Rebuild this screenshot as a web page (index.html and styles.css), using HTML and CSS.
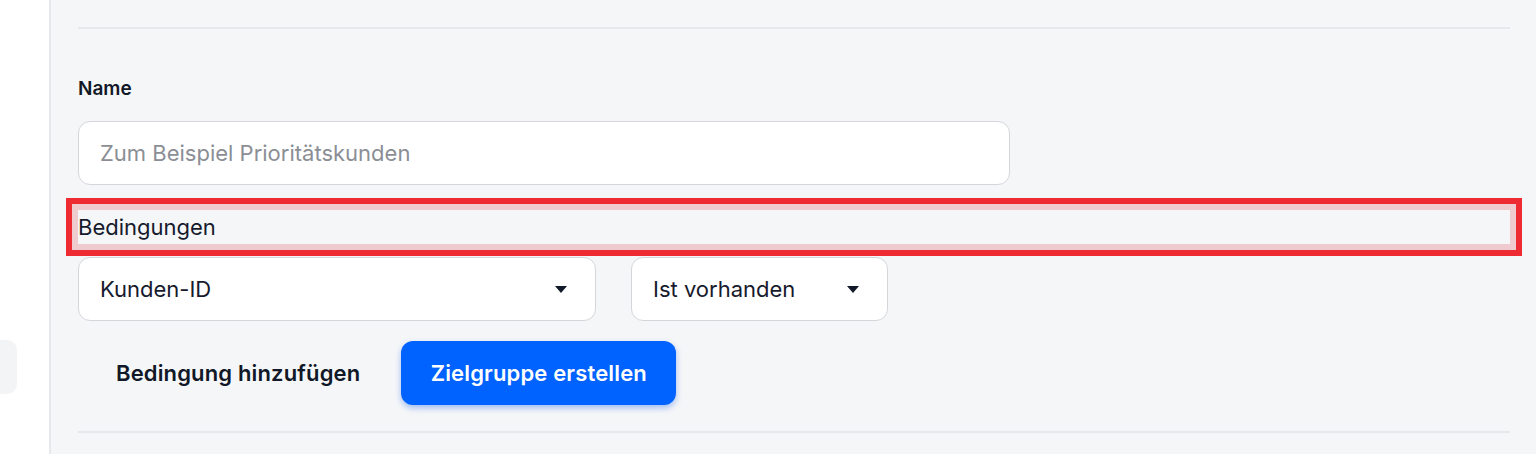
FILE: index.html
```html
<!DOCTYPE html>
<html lang="de">
<head>
<meta charset="utf-8">
<title>Zielgruppe erstellen</title>
<link rel="stylesheet" href="styles.css">
</head>
<body>
<div class="app">
  <aside class="sidebar">
    <div class="side-item"></div>
  </aside>
  <main class="main">
    <hr class="divider">
    <form class="form">
      <label class="field-label" for="name">Name</label>
      <input id="name" class="text-input" type="text" placeholder="Zum Beispiel Prioritätskunden">
      <div class="section-label">Bedingungen</div>
      <div class="conditions">
        <div class="select select-wide">
          <span>Kunden-ID</span>
          <svg class="caret" width="12" height="7" viewBox="0 0 12 7"><path d="M0 0h12L6 7z" fill="#111827"/></svg>
        </div>
        <div class="select select-narrow">
          <span>Ist vorhanden</span>
          <svg class="caret" width="12" height="7" viewBox="0 0 12 7"><path d="M0 0h12L6 7z" fill="#111827"/></svg>
        </div>
      </div>
      <div class="actions">
        <button type="button" class="btn-text">Bedingung hinzufügen</button>
        <button type="button" class="btn-primary">Zielgruppe erstellen</button>
      </div>
    </form>
    <hr class="divider divider-bottom">
  </main>
</div>
</body>
</html>
```

FILE: styles.css
```css
* { box-sizing: border-box; }

html, body {
  margin: 0;
  padding: 0;
  height: 100%;
}

body {
  font-family: Inter, "Noto Sans", sans-serif;
  color: #111827;
  background: #f5f6f8;
  overflow: hidden;
}

.app {
  display: flex;
  height: 454px;
}

.sidebar {
  width: 51px;
  flex: none;
  background: #ffffff;
  border-right: 2px solid #e7e8eb;
  padding-top: 340px;
}

.side-item {
  width: 17px;
  height: 54px;
  background: #f3f4f6;
  border-radius: 0 10px 10px 0;
}

.main {
  flex: 1;
  padding: 27px 26px 0 27px;
}

.divider {
  margin: 0;
  border: 0;
  height: 2px;
  background: #e6e8eb;
}

.divider-bottom {
  margin-top: 26px;
}

.form {
  display: flex;
  flex-direction: column;
  align-items: flex-start;
  padding-top: 48px;
}

.field-label {
  font-size: 19px;
  line-height: 24px;
  font-weight: 600;
  color: #111827;
}

.text-input {
  margin-top: 20px;
  width: 932px;
  height: 64px;
  border: 1.5px solid #d4d6da;
  border-radius: 12px;
  background: #ffffff;
  padding: 0 21px;
  font-family: inherit;
  font-size: 22px;
  color: #111827;
  outline: none;
}

.text-input::placeholder {
  color: #8b8e95;
}

.section-label {
  position: relative;
  align-self: stretch;
  margin-top: 28px;
  font-size: 22px;
  line-height: 28px;
  color: #161a2c;
}

.section-label::after {
  content: "";
  position: absolute;
  left: -12px;
  right: -12px;
  top: -15px;
  bottom: -15px;
  border: 6px solid #ee2a32;
  box-shadow: inset 0 0 0 6px rgba(232, 150, 158, 0.45);
  pointer-events: none;
}

.conditions {
  display: flex;
  gap: 35px;
  margin-top: 16px;
}

.select {
  height: 64px;
  display: flex;
  align-items: center;
  justify-content: space-between;
  background: #ffffff;
  border: 1.5px solid #d4d6da;
  border-radius: 12px;
  padding: 0 28px 0 21px;
  font-size: 22px;
  color: #161a2c;
}

.select-wide { width: 518px; }
.select-narrow { width: 257px; }

.caret { flex: none; }

.actions {
  display: flex;
  align-items: center;
  gap: 3px;
  margin-top: 20px;
}

.btn-text {
  height: 64px;
  padding: 0 38px;
  border: 0;
  background: transparent;
  font-family: inherit;
  font-size: 22px;
  font-weight: 600;
  letter-spacing: 0.15px;
  color: #111827;
}

.btn-primary {
  height: 64px;
  width: 275px;
  border: 0;
  border-radius: 12px;
  background: #0062ff;
  color: #ffffff;
  font-family: inherit;
  font-size: 22px;
  font-weight: 600;
  letter-spacing: 0.15px;
  box-shadow: 0 3px 6px rgba(0, 82, 230, 0.35);
}
```
